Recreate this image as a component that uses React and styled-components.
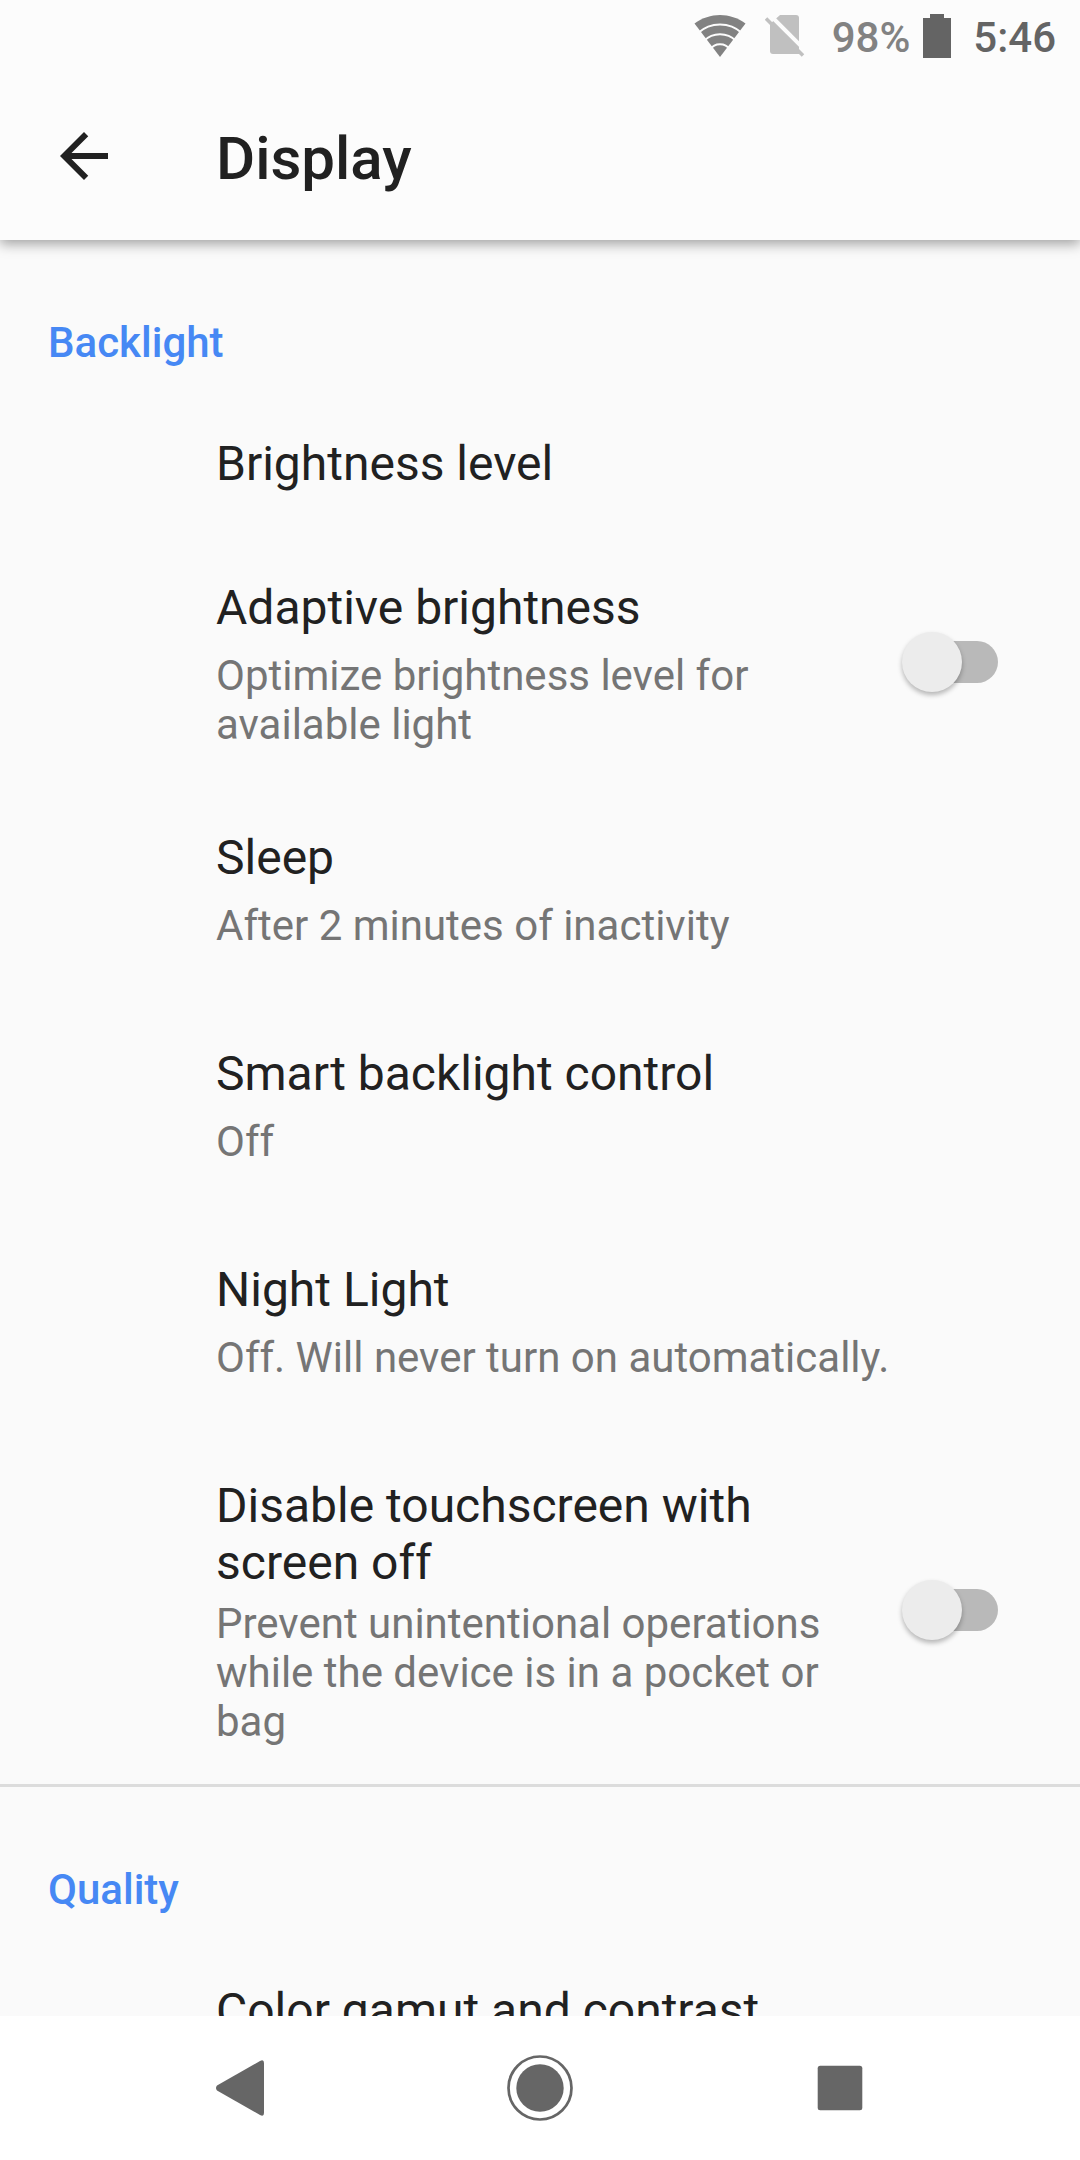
import React, { useState } from "react";
import styled, { createGlobalStyle, css } from "styled-components";

const COLOUR = {
  bar: "#fcfcfc",
  background: "#fafafa",
  navigation: "#ffffff",
  text: "#212121",
  secondaryText: "#757575",
  accent: "#4688f4",
  divider: "#dcdcdc",
  statusDark: "#646464",
  status: "#828282",
  statusDisabled: "#c0c0c0",
  navIcon: "#666666",
  track: "#b9b9b9",
  thumb: "#ececec",
};

const TEXT_INSET_PX = 216;

const GlobalStyle = createGlobalStyle`
  html, body {
    margin: 0;
    padding: 0;
    background-color: ${COLOUR.background};
    color: ${COLOUR.text};
    font-family: Roboto, "Liberation Sans", sans-serif;
  }

  *, *::before, *::after {
    box-sizing: border-box;
  }
`

const Screen = styled.div`
  display: flex;
  flex-direction: column;
  height: 100vh;
`

const Header = styled.header`
  position: relative;
  z-index: 1;
  flex: none;
  background-color: ${COLOUR.bar};
  box-shadow: 0 4px 12px rgba(0, 0, 0, 0.36);
`

const StatusBar = styled.div`
  display: flex;
  align-items: center;
  justify-content: flex-end;
  height: 72px;
  padding-right: 24px;
  font-size: 42px;
  font-weight: 500;
  line-height: 49px;

  svg {
    display: block;
  }
`

const StatusIcons = styled.div`
  display: flex;
  align-items: center;
  gap: 19px;
  margin-right: 27px;
`

const StatusText = styled.span`
  padding-top: 3px;
  color: ${({ $colour }) => $colour};
`

const Battery = styled.div`
  display: flex;
  align-items: center;
  gap: 13px;
  margin-right: 22px;
`

const Toolbar = styled.div`
  display: flex;
  align-items: center;
  height: 168px;
  padding-left: 48px;
`

const IconButton = styled.button`
  display: flex;
  padding: 0;
  border: 0;
  background: none;
  color: inherit;
`

const Title = styled.h1`
  margin: 0 0 0 96px;
  padding-top: 5px;
  font-size: 60px;
  font-weight: 500;
  line-height: 70px;
`

const Content = styled.main`
  flex: 1;
  min-height: 0;
  overflow-y: auto;
  scrollbar-width: none;
`

const Section = styled.section`
  & + & {
    border-top: 3px solid ${COLOUR.divider};
  }
`

const SectionTitle = styled.h2`
  margin: 0;
  padding: 78px 48px 26px;
  color: ${COLOUR.accent};
  font-size: 42px;
  font-weight: 500;
  line-height: 49px;
`

const rowStyle = css`
  display: flex;
  width: 100%;
  padding: 0 82px 0 ${TEXT_INSET_PX}px;
  border: 0;
  background: none;
  color: inherit;
  font-family: inherit;
  text-align: left;
`

const LinkRow = styled.button`
  ${rowStyle}
  align-items: flex-start;
  min-height: ${({ $tall }) => $tall ? "216px" : "144px"};
`

const SwitchRow = styled.label`
  ${rowStyle}
  align-items: center;
  gap: 40px;
`

const RowText = styled.span`
  display: flex;
  flex: 1;
  flex-direction: column;
  gap: 8px;
  padding: 42px 0 38px;
`

const RowTitle = styled.span`
  min-height: 64px;
  font-size: 48px;
  line-height: 57px;
`

const RowSummary = styled.span`
  color: ${COLOUR.secondaryText};
  font-size: 42px;
  line-height: 49px;
`

const Switch = styled.input`
  position: relative;
  flex: none;
  width: 96px;
  height: 60px;
  margin: 0;
  appearance: none;

  &::before {
    content: "";
    position: absolute;
    top: 9px;
    right: 0;
    left: 6px;
    height: 42px;
    border-radius: 21px;
    background-color: ${COLOUR.track};
  }

  &::after {
    content: "";
    position: absolute;
    top: 0;
    left: 0;
    width: 60px;
    height: 60px;
    border-radius: 50%;
    background-color: ${COLOUR.thumb};
    box-shadow: 0 3px 5px rgba(0, 0, 0, 0.28);
  }

  &:checked::before {
    background-color: #a2c3fc;
  }

  &:checked::after {
    left: 36px;
    background-color: ${COLOUR.accent};
  }
`

const NavigationBar = styled.nav`
  display: grid;
  flex: none;
  grid-template-columns: repeat(3, 1fr);
  height: 144px;
  padding: 0 90px;
  background-color: ${COLOUR.navigation};
  color: ${COLOUR.navIcon};
`

const NavButton = styled(IconButton)`
  align-items: center;
  justify-content: center;
`

const WifiIcon = () => (
  <svg width="52" height="44" viewBox="0 0 52 44">
    <path d="M26 43 L0.5 9.5 C16 -2 36 -2 51.5 9.5 Z" fill={COLOUR.status} />
    <g fill="none" stroke={COLOUR.bar} strokeWidth="2">
      <path d="M4 19 A32.5 32.5 0 0 1 48 19" />
      <path d="M10 27 A22.5 22.5 0 0 1 42 27" />
      <path d="M16 35.5 A12 12 0 0 1 36 35.5" />
    </g>
  </svg>
)

const NoSimIcon = () => (
  <svg width="40" height="42" viewBox="0 0 40 42">
    <path d="M15 0 H31 Q34 0 34 3 V39 H8 Q5 39 5 36 V9 Z" fill={COLOUR.statusDisabled} />
    <path d="M4 -1 L42 37" stroke={COLOUR.bar} strokeWidth="4" />
    <path d="M1 3.5 L38 40.5" stroke={COLOUR.statusDisabled} strokeWidth="3.6" />
  </svg>
)

const BatteryIcon = () => (
  <svg width="28" height="44" viewBox="0 0 28 44">
    <path d="M7 0 H21 V4 H28 V44 H0 V4 H7 Z" fill={COLOUR.statusDark} />
  </svg>
)

const ArrowIcon = () => (
  <svg width="72" height="72" viewBox="0 0 24 24">
    <path d="M20 11H7.83l5.59-5.59L12 4l-8 8 8 8 1.41-1.41L7.83 13H20v-2z" fill="currentColor" />
  </svg>
)

const BackIcon = () => (
  <svg width="72" height="72" viewBox="0 0 72 72" fill="currentColor">
    <path d="M13 33.5 L56 9 Q60 7 60 11 V61 Q60 65 56 63 L13 38.5 Q11 36 13 33.5 Z" />
  </svg>
)

const HomeIcon = () => (
  <svg width="72" height="72" viewBox="0 0 72 72" fill="currentColor">
    <circle cx="36" cy="36" r="31.5" fill="none" stroke="currentColor" strokeWidth="2.7" />
    <circle cx="36" cy="36" r="23.7" />
  </svg>
)

const RecentsIcon = () => (
  <svg width="72" height="72" viewBox="0 0 72 72" fill="currentColor">
    <rect x="13.7" y="13.7" width="44.6" height="44.6" rx="2.5" />
  </svg>
)

const sections = [
  {
    title: "Backlight",
    items: [
      { title: "Brightness level" },
      { title: "Adaptive brightness", summary: "Optimize brightness level for available light", toggle: true },
      { title: "Sleep", summary: "After 2 minutes of inactivity" },
      { title: "Smart backlight control", summary: "Off" },
      { title: "Night Light", summary: "Off. Will never turn on automatically." },
      {
        title: "Disable touchscreen with screen off",
        summary: "Prevent unintentional operations while the device is in a pocket or bag",
        toggle: true,
      },
    ],
  },
  {
    title: "Quality",
    items: [{ title: "Color gamut and contrast" }],
  },
];

const Setting = ({ title, summary, toggle }) => {
  const [checked, setChecked] = useState(false);

  const text = (
    <RowText>
      <RowTitle>{title}</RowTitle>
      {summary && <RowSummary>{summary}</RowSummary>}
    </RowText>
  );

  if (!toggle) {
    return <LinkRow type="button" $tall={Boolean(summary)}>{text}</LinkRow>;
  }

  return (
    <SwitchRow>
      {text}
      <Switch
        type="checkbox"
        role="switch"
        checked={checked}
        onChange={event => setChecked(event.target.checked)}
      />
    </SwitchRow>
  );
}

const App = () => (
  <>
    <GlobalStyle />
    <Screen>
      <Header>
        <StatusBar>
          <StatusIcons>
            <WifiIcon />
            <NoSimIcon />
          </StatusIcons>
          <Battery>
            <StatusText $colour={COLOUR.status}>98%</StatusText>
            <BatteryIcon />
          </Battery>
          <StatusText $colour={COLOUR.statusDark}>5:46</StatusText>
        </StatusBar>
        <Toolbar>
          <IconButton type="button" aria-label="Navigate up"><ArrowIcon /></IconButton>
          <Title>Display</Title>
        </Toolbar>
      </Header>
      <Content>
        {sections.map(({ title, items }) => (
          <Section key={title}>
            <SectionTitle>{title}</SectionTitle>
            {items.map(item => <Setting key={item.title} {...item} />)}
          </Section>
        ))}
      </Content>
      <NavigationBar>
        <NavButton type="button" aria-label="Back"><BackIcon /></NavButton>
        <NavButton type="button" aria-label="Home"><HomeIcon /></NavButton>
        <NavButton type="button" aria-label="Recents"><RecentsIcon /></NavButton>
      </NavigationBar>
    </Screen>
  </>
)

export default App;
